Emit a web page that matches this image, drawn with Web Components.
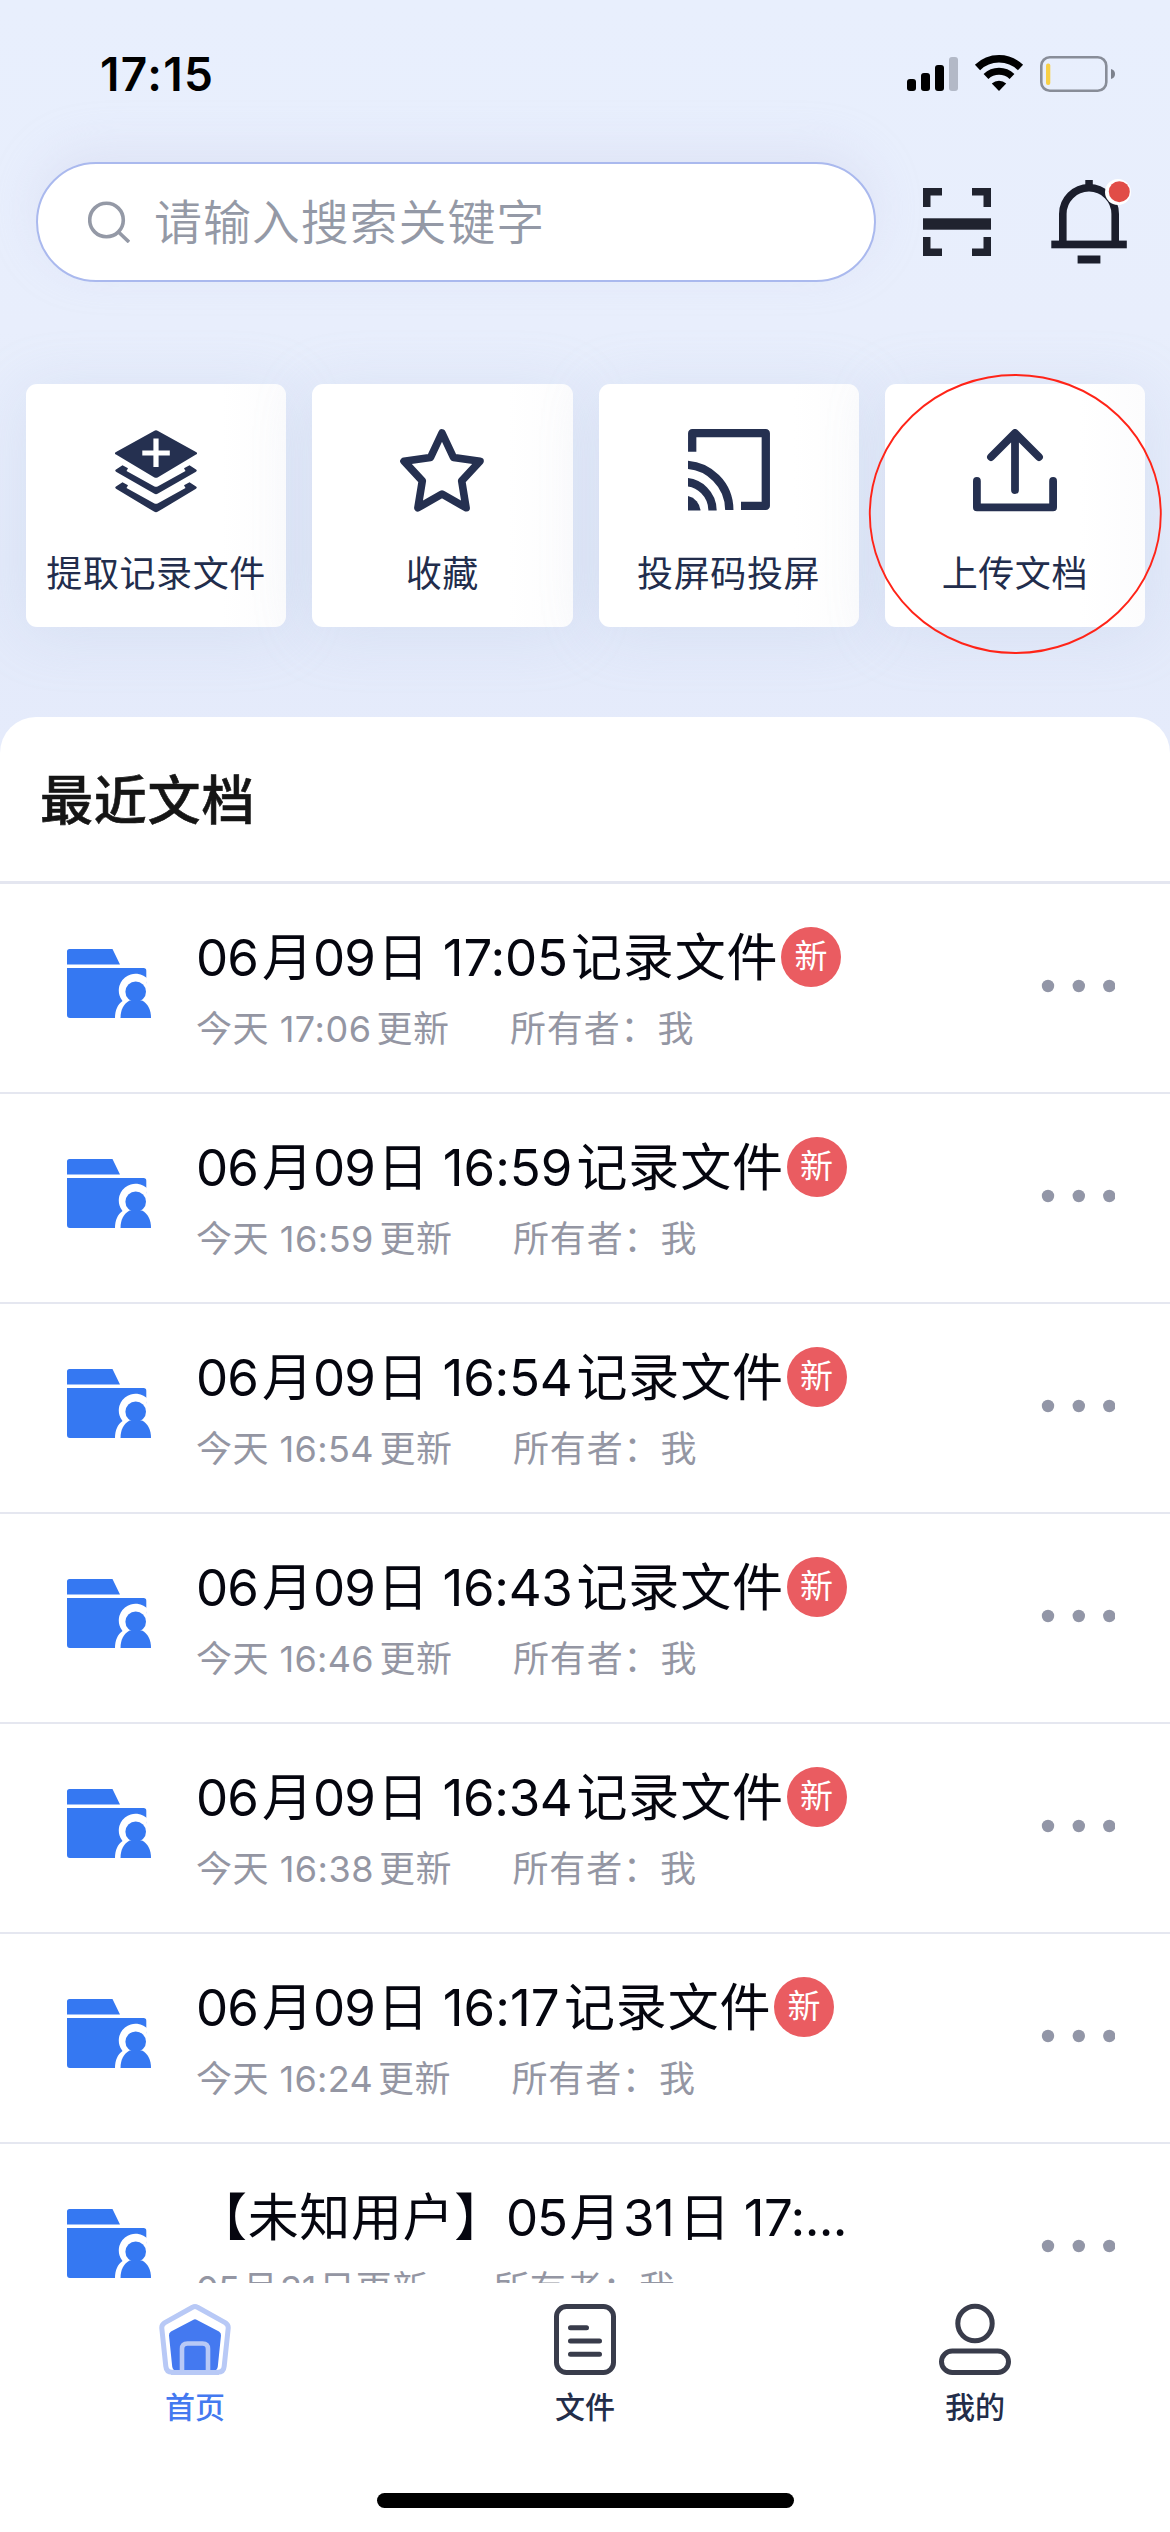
<!DOCTYPE html>
<html lang="zh-CN">
<head>
<meta charset="utf-8">
<title>首页</title>
<style>
html,body{margin:0;padding:0}
body{width:1170px;height:2532px;overflow:hidden;font-family:Inter,"Noto Sans CJK SC",sans-serif;background:#e8effd}
</style>
</head>
<body>
<home-screen></home-screen>
<script>
const define = (name, html, setup) => {
  const t = document.createElement('template');
  t.innerHTML = html;
  customElements.define(name, class extends HTMLElement {
    connectedCallback() {
      if (this.shadowRoot) return;
      this.attachShadow({mode: 'open'}).appendChild(t.content.cloneNode(true));
      if (setup) setup(this, this.shadowRoot);
    }
  });
};

define('status-bar', `
<style>
:host{display:flex;height:148px;box-sizing:border-box;padding:0 55px 0 100px;align-items:center;justify-content:space-between;color:#000}
.time{font-size:46px;font-weight:600;letter-spacing:1.4px;line-height:60px}
svg{display:block}
</style>
<span class="time">17:15</span>
<svg width="208" height="40" viewBox="907 54 208 40">
 <rect x="907" y="79" width="9" height="12" rx="3"/><rect x="921" y="73" width="9" height="18" rx="3"/>
 <rect x="935" y="65" width="9" height="26" rx="3"/><rect x="949" y="57" width="9" height="34" rx="3" fill="#b3b9c7"/>
 <path d="M977.500 67.500a31 31 0 0 1 43 0" fill="none" stroke="#000" stroke-width="7.500"/>
 <path d="M986 76.500a19 19 0 0 1 26 0" fill="none" stroke="#000" stroke-width="7"/>
 <path d="M991.800 83.500a11 11 0 0 1 14.400 0l-7.200 7.500z"/>
 <rect x="1041.300" y="57.300" width="65" height="33.400" rx="8.500" fill="none" stroke="#888d98" stroke-width="2.600"/>
 <rect x="1046" y="63.500" width="4.300" height="21.500" rx="2" fill="#f7cf46"/>
 <path d="M1111 69q4 1 4 5t-4 5z" fill="#7d828d"/>
</svg>`);

define('search-field', `
<style>
:host{display:flex;align-items:center;box-sizing:border-box;width:840px;flex:none;height:120px;border:2px solid #aab9ee;border-radius:60px;background:#fff;padding-left:50px;gap:24px;color:#9499a6;box-shadow:0 -14px 44px rgba(205,210,235,.35)}
span{font-size:48px;line-height:60px;letter-spacing:.9px;font-weight:350;padding-top:1px}
</style>
<svg width="42" height="42" viewBox="88 201 42 42" fill="none" stroke="#9499a6" stroke-width="3.600"><circle cx="106.500" cy="220" r="16.800"/><path d="M118.500 232l10.500 10"/></svg>
<span><slot></slot></span>`);

define('header-bar', `
<style>
:host{display:flex;height:148px;padding:0 39px 0 36px;align-items:center;box-sizing:border-box}
svg.scan{margin-left:47px}svg.bell{margin-left:60px}
svg{display:block;flex:none}
</style>
<search-field>请输入搜索关键字</search-field>
<svg class="scan" width="68" height="68" viewBox="923 188 68 68"><g fill="none" stroke="#20232f" stroke-width="7.500"><path d="M926.750 207v-15.250h15.250M972 191.750h15.250v15.250M926.750 237v15.250h15.250M972 252.250h15.250v-15.250"/></g><rect x="923" y="218.300" width="68" height="11.400" fill="#20232f"/></svg>
<svg class="bell" width="80" height="88" viewBox="1051 178 80 88"><g fill="#1b1e2c"><rect x="1085.300" y="180" width="7.500" height="8"/><rect x="1051.300" y="240.600" width="75.500" height="7.700"/><rect x="1077.600" y="255.500" width="22.800" height="8"/></g><path d="M1062.800 241v-27a26.200 26.200 0 0 1 52.400 0v27" fill="none" stroke="#1b1e2c" stroke-width="7.600"/><circle cx="1118" cy="192" r="13" fill="#fff"/><circle cx="1119.300" cy="191.700" r="10.500" fill="#e14d47"/></svg>`);

const QUICK = {
 stack: ['115 429 82 84', '<path d="M154 431q2-1.300 4 0l38 21q2.300 1.300 0 2.600l-38 22.600q-2 1.300-4 0l-38-22.600q-2.300-1.300 0-2.600z"/><path d="M156 438.500v28.500M142.300 453h27.500" stroke="#fff" stroke-width="5.200"/><path d="M116 469.400l6.500-4.200 5.500 3-1.500 2.800 27.500 15.200q2 1.200 4 0l27.500-15.200-1.500-2.800 5.500-3 6.500 4.200q1.500 1.200 0 2.400l-38 21.800q-2 1.300-4 0l-38-21.800q-1.500-1.200 0-2.400z"/><path d="M116 486.400l6.500-4.200 5.500 3-1.500 2.800 27.500 15.200q2 1.200 4 0l27.500-15.200-1.500-2.800 5.500-3 6.500 4.200q1.500 1.200 0 2.400l-38 22.800q-2 1.300-4 0l-38-22.800q-1.500-1.200 0-2.400z"/>'],
 star: ['400 429 84 84', '<path d="M442 433l11.500 24.500 26.500 3.700-18.300 19.600 4.400 27-24.100-13.800-24.100 13.800 4.400-27-18.300-19.600 26.500-3.700z" fill="none" stroke="#253050" stroke-width="7.600" stroke-linejoin="round"/>'],
 cast: ['686 429 82 84', '<g fill="none" stroke="#253050" stroke-width="8.300"><path d="M690.200 451.700v-18.500h73.600v72.700h-24.800" stroke-linejoin="round"/><path d="M682 464.700a45.300 45.300 0 0 1 45.300 45.300M682 482a28.500 28.500 0 0 1 28.500 28.500"/></g><path d="M686 496a16 16 0 0 1 12.500 14.500h-12.500z"/>'],
 upload: ['972 429 84 84', '<g fill="none" stroke="#253050" stroke-width="7.800" stroke-linecap="round" stroke-linejoin="round"><path d="M990 457l24-24 24 24M1014 434v56M975.900 481v26.300h76.200v-26.300"/></g>']
};
define('quick-card', `
<style>
:host{display:flex;flex-direction:column;align-items:center;flex:1;height:243px;box-sizing:border-box;padding-top:45px;border-radius:11px;background:linear-gradient(90deg,#fff 75%,#fcfcfd);box-shadow:0 6px 60px rgba(175,190,222,.23);color:#222d4c}
svg{display:block;height:84px;flex:none}
span{font-size:36px;line-height:54px;letter-spacing:.6px;margin-top:34px;white-space:nowrap;font-weight:400}
</style>
<svg height="84" fill="#253050"></svg><span><slot></slot></span>`, (el, root) => {
  const s = root.querySelector('svg'), q = QUICK[el.getAttribute('icon')];
  s.setAttribute('viewBox', q[0]); s.setAttribute('width', q[0].split(' ')[2]); s.innerHTML = q[1];
});

define('quick-grid', `
<style>
:host{display:flex;gap:26px;margin:88px 25px 0 26px;position:relative}
.ring{position:absolute;left:843px;top:-10px;overflow:visible}
</style>
<quick-card icon="stack">提取记录文件</quick-card><quick-card icon="star">收藏</quick-card><quick-card icon="cast">投屏码投屏</quick-card><quick-card icon="upload">上传文档</quick-card>
<svg class="ring" width="293" height="280"><ellipse cx="146.300" cy="140" rx="145.500" ry="139" fill="none" stroke="#ff2418" stroke-width="1.900"/></svg>`);

define('doc-row', `
<style>
:host{display:flex;height:210px;box-sizing:border-box;border-bottom:2px solid #e5e7f0;padding:0 55px 0 67px;align-items:flex-start;flex:none}
.folder{margin-top:65px;flex:none}
.text{margin-left:45px;flex:1;min-width:0}
.title{display:flex;align-items:center;height:64px;margin-top:42px;color:#05060f;white-space:pre}
.title .t,.sub .t{display:flex;white-space:pre}
.title .t{font-size:51px;line-height:64px}
.badge{width:60px;height:60px;border-radius:50%;background:#ea5c61;color:#fff;font-size:33px;line-height:58px;text-align:center;margin:-2px 0 0 2.500px;flex:none}
.sub{display:flex;height:48px;margin-top:15px;color:#9496a3;font-size:36px;line-height:48px;font-weight:400}
.more{margin-top:94px;flex:none}
svg{display:block}
.t span{display:block;flex:none}
</style>
<svg class="folder" width="84" height="69" viewBox="67 949 84 69"><g fill="#3578f2"><path d="M67 964.500v-13q0-2.500 2.500-2.500h43l7.500 15.500zM67 968h76.500q2.800 0 2.800 2.800v20.200l-8 27h-68.300q-3 0-3-3z"/></g><path d="M115 1018.500c0-8 2.500-14 7.500-17.500a16.300 16.300 0 1 1 26-21l-2 2 8 38.500z" fill="#fff"/><circle cx="135.700" cy="991.700" r="10.300" fill="#3578f2"/><path d="M120.500 1018c0-8 3-14 9-17.500h12.500c6 3 9 9.500 9 17.500z" fill="#3578f2"/></svg>
<div class="text"><div class="title"><div class="t"></div></div><div class="sub"><div class="t a"></div><div class="t b"></div></div></div>
<svg class="more" width="75" height="16" viewBox="1040 978 75 16" fill="#9296a7"><circle cx="1048" cy="986" r="6.200"/><circle cx="1078.800" cy="986" r="6.200"/><circle cx="1109.300" cy="986" r="6.200"/></svg>`, (el, root) => {
  // Each run is written text@width@space: its advance, then the space after it, in pixels.
  const fill = (box, spec) => spec.split('|').forEach(part => {
    const [text, w, pad] = part.split('@');
    const s = document.createElement('span');
    s.textContent = text; s.style.width = w + 'px'; s.style.marginRight = (pad || 0) + 'px';
    box.appendChild(s);
    const r = document.createRange(); r.selectNodeContents(s);
    const gap = (w - r.getBoundingClientRect().width) / [...text].length;
    s.style.letterSpacing = gap.toFixed(3) + 'px';
  });
  fill(root.querySelector('.title .t'), el.getAttribute('name'));
  fill(root.querySelector('.a'), el.getAttribute('time'));
  fill(root.querySelector('.b'), el.getAttribute('owner'));
  root.querySelector('.b').style.marginLeft = el.getAttribute('gap') + 'px';
  if (el.hasAttribute('fresh')) {
    const b = document.createElement('div'); b.className = 'badge'; b.textContent = '新';
    root.querySelector('.title').appendChild(b);
  }
});

define('recent-docs', `
<style>
:host{display:flex;flex-direction:column;margin-top:90px;height:1566px;background:#fff;border-radius:36px 36px 0 0;overflow:hidden;flex:none}
h2{margin:0;height:167px;flex:none;box-sizing:border-box;padding:45px 0 0 40px;border-bottom:3px solid #e4e6f0;font-size:53px;line-height:78px;letter-spacing:.8px;font-weight:500;-webkit-text-stroke:.6px #151515;color:#151515}
</style>
<h2>最近文档</h2>
<slot></slot>`);

const TABS = {
 home:['159 2303 72 73','<path d="M192.500 2307.300q2.500-1.600 5 0l28 15.500q3 2 2.700 5.500l-4 38q-.5 6-6.500 6h-45.400q-6 0-6.500-6l-4-38q-.3-3.500 2.700-5.500z" fill="none" stroke="#b8c9f6" stroke-width="5"/><path d="M193 2320q2-1.300 4 0l22 11.500q2.300 1.500 2 4l-3.200 31q-.5 4-4 4h-37.600q-3.500 0-4-4l-3.200-31q-.3-2.500 2-4z" fill="#4479f0"/><path d="M182 2370v-21q0-5.500 5.500-5.500h15q5.500 0 5.500 5.500v21" fill="none" stroke="#b8c9f6" stroke-width="4.600"/><path d="M171 2372.500h48" stroke="#b8c9f6" stroke-width="5"/>'],
 file:['554 2303 62 73','<g fill="none" stroke="#393c4b" stroke-width="5" stroke-linecap="round"><rect x="556.500" y="2306.500" width="57" height="66" rx="10"/><path d="M570.500 2327.700h16M570.500 2341h29M570.500 2354.300h29"/></g>'],
 me:['939 2303 72 73','<g fill="none" stroke="#393c4b" stroke-width="5"><circle cx="975" cy="2323.500" r="17.200"/><rect x="941.500" y="2351" width="67" height="21.500" rx="10.750"/></g>']
};
define('tab-item', `
<style>
:host{display:flex;flex:1;flex-direction:column;align-items:center;padding-top:20px;color:#232d49}
:host([active]){color:#4479f0}
svg{display:block}
span{font-size:30px;line-height:44px;margin-top:9px;font-weight:500}
</style>
<svg height="73"></svg><span><slot></slot></span>`, (el, root) => {
  const s = root.querySelector('svg'), q = TABS[el.getAttribute('icon')];
  s.setAttribute('viewBox', q[0]); s.setAttribute('width', q[0].split(' ')[2]); s.innerHTML = q[1];
});
define('tab-bar', `
<style>
:host{display:flex;flex-direction:column;align-items:center;height:249px;background:#fff;flex:none}
nav{display:flex;width:100%;height:210px}
i{display:block;width:417px;height:15px;border-radius:8px;background:#000}
</style>
<nav><tab-item icon="home" active>首页</tab-item><tab-item icon="file">文件</tab-item><tab-item icon="me">我的</tab-item></nav><i></i>`);

define('home-screen', `
<style>
:host{display:flex;flex-direction:column;width:1170px;height:2532px;overflow:hidden;background:linear-gradient(#e8effd 0,#e8eefc 330px,#e3eafa 560px,#e5ebfb 740px)}
</style>
<status-bar></status-bar>
<header-bar></header-bar>
<quick-grid></quick-grid>
<recent-docs>
<doc-row fresh name="06@62@4|月@51|09@62@2.5|日@51| 17:05@139.5@3|记录文件@207.5" time="今天@73| 17:06@102.5@5|更新@73" owner="所有者：@147.5|我@37" gap="60.5"></doc-row>
<doc-row fresh name="06@62@4|月@51|09@62@2.5|日@51| 16:59@144@4|记录文件@207.5" time="今天@73| 16:59@105@5.5|更新@73" owner="所有者：@147.5|我@37" gap="60.5"></doc-row>
<doc-row fresh name="06@62@4|月@51|09@62@2.5|日@51| 16:54@144@4|记录文件@207.5" time="今天@73| 16:54@105@5.5|更新@73" owner="所有者：@147.5|我@37" gap="60.5"></doc-row>
<doc-row fresh name="06@62@4|月@51|09@62@2.5|日@51| 16:43@144@4|记录文件@207.5" time="今天@73| 16:46@105@5.5|更新@73" owner="所有者：@147.5|我@37" gap="60.5"></doc-row>
<doc-row fresh name="06@62@4|月@51|09@62@2.5|日@51| 16:34@144@4|记录文件@207.5" time="今天@73| 16:38@105@5|更新@73" owner="所有者：@147.5|我@37" gap="60.5"></doc-row>
<doc-row fresh name="06@62@4|月@51|09@62@2.5|日@51| 16:17@131@4.5|记录文件@207.5" time="今天@73| 16:24@104@5|更新@73" owner="所有者：@147.5|我@37" gap="60.5"></doc-row>
<doc-row name="【未知用户】@310|05@61@2.5|月@51@2.5|31@51@5|日@51| 17:...@117" time="05@43@3|月@36@2|31@36@3|日更新@110" owner="所有者：@145.5|我@37" gap="64.5"></doc-row>
</recent-docs>
<tab-bar></tab-bar>`);
</script>
</body>
</html>
